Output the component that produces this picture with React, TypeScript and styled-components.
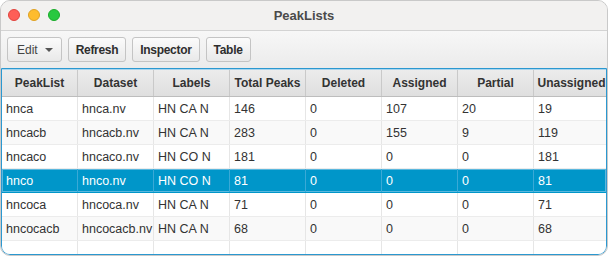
import React from 'react';
import styled, {createGlobalStyle} from 'styled-components';

const GlobalStyle = createGlobalStyle`
  html, body {
    margin: 0;
    padding: 0;
    background: #ffffff;
  }
  body {
    font-family: "Liberation Sans", Arial, sans-serif;
    color: #333333;
  }
`;

type PeakRow = {
  peakList: string;
  dataset: string;
  labels: string;
  total: number;
  deleted: number;
  assigned: number;
  partial: number;
  unassigned: number;
};

const columns = [
  'PeakList',
  'Dataset',
  'Labels',
  'Total Peaks',
  'Deleted',
  'Assigned',
  'Partial',
  'Unassigned',
];

const rows: PeakRow[] = [
  {peakList: 'hnca', dataset: 'hnca.nv', labels: 'HN CA N', total: 146, deleted: 0, assigned: 107, partial: 20, unassigned: 19},
  {peakList: 'hncacb', dataset: 'hncacb.nv', labels: 'HN CA N', total: 283, deleted: 0, assigned: 155, partial: 9, unassigned: 119},
  {peakList: 'hncaco', dataset: 'hncaco.nv', labels: 'HN CO N', total: 181, deleted: 0, assigned: 0, partial: 0, unassigned: 181},
  {peakList: 'hnco', dataset: 'hnco.nv', labels: 'HN CO N', total: 81, deleted: 0, assigned: 0, partial: 0, unassigned: 81},
  {peakList: 'hncoca', dataset: 'hncoca.nv', labels: 'HN CA N', total: 71, deleted: 0, assigned: 0, partial: 0, unassigned: 71},
  {peakList: 'hncocacb', dataset: 'hncocacb.nv', labels: 'HN CA N', total: 68, deleted: 0, assigned: 0, partial: 0, unassigned: 68},
];

const SELECTED = 3;

export default function App() {
  return (
    <>
      <GlobalStyle />
      <Window>
        <TitleBar>
          <Lights>
            <Light $color="#fe5f57" $edge="#e0443e" />
            <Light $color="#febc2e" $edge="#dea123" />
            <Light $color="#28c840" $edge="#1aab29" />
          </Lights>
          <Title>PeakLists</Title>
        </TitleBar>
        <Toolbar>
          <Button $regular>
            Edit
            <Caret />
          </Button>
          <Button>Refresh</Button>
          <Button>Inspector</Button>
          <Button>Table</Button>
        </Toolbar>
        <TableFrame>
          <HeaderRow>
            {columns.map((c) => (
              <HeaderCell key={c}>{c}</HeaderCell>
            ))}
          </HeaderRow>
          {rows.map((r, i) => (
            <Row key={r.peakList} $odd={i % 2 === 1} $selected={i === SELECTED}>
              <Cell>{r.peakList}</Cell>
              <Cell>{r.dataset}</Cell>
              <Cell>{r.labels}</Cell>
              <Cell>{r.total}</Cell>
              <Cell>{r.deleted}</Cell>
              <Cell>{r.assigned}</Cell>
              <Cell>{r.partial}</Cell>
              <Cell>{r.unassigned}</Cell>
            </Row>
          ))}
          <Row $odd={false} $selected={false}>
            {columns.map((c) => (
              <Cell key={c} />
            ))}
          </Row>
        </TableFrame>
      </Window>
    </>
  );
}

const Window = styled.div`
  width: 608px;
  height: 256px;
  box-sizing: border-box;
  display: flex;
  flex-direction: column;
  border-radius: 10px;
  overflow: hidden;
  background: #ececec;
  border: 1px solid #c9c9c9;
`;

const TitleBar = styled.div`
  position: relative;
  height: 29px;
  flex: none;
  display: flex;
  align-items: center;
  justify-content: center;
  background: #f2f1f0;
  border-bottom: 1px solid #d3d3d3;
`;

const Lights = styled.div`
  position: absolute;
  left: 7px;
  top: 8px;
  display: flex;
  gap: 8px;
`;

const Light = styled.span<{$color: string; $edge: string}>`
  width: 12px;
  height: 12px;
  border-radius: 50%;
  box-sizing: border-box;
  background: ${(p) => p.$color};
  border: 0.5px solid ${(p) => p.$edge};
`;

const Title = styled.div`
  font-size: 13px;
  font-weight: bold;
  color: #4a4a4a;
`;

const Toolbar = styled.div`
  height: 37px;
  flex: none;
  box-sizing: border-box;
  display: flex;
  align-items: center;
  gap: 6px;
  padding: 0 6px;
  background: linear-gradient(#f7f7f7, #ebebeb);
`;

const Button = styled.div<{$regular?: boolean}>`
  height: 25px;
  box-sizing: border-box;
  display: flex;
  align-items: center;
  gap: 7px;
  border: 1px solid #c4c4c4;
  border-radius: 3px;
  background: linear-gradient(#fbfbfb, #e9e9e9);
  font-size: 12px;
  font-weight: ${(p) => (p.$regular ? 'normal' : 'bold')};
  letter-spacing: ${(p) => (p.$regular ? '0' : '-0.3px')};
  color: ${(p) => (p.$regular ? '#444444' : '#2e2e2e')};
  padding-left: ${(p) => (p.$regular ? '9px' : '7px')};
  padding-right: ${(p) => (p.$regular ? '8px' : '7px')};
`;

const Caret = styled.span`
  width: 0;
  height: 0;
  border-left: 4px solid transparent;
  border-right: 4px solid transparent;
  border-top: 4px solid #555555;
`;

const TableFrame = styled.div`
  flex: 1;
  box-sizing: border-box;
  overflow: hidden;
  background: #ffffff;
  border: 1px solid #2b98d0;
  box-shadow: inset 0 0 0 1px #a9d5ee;
  border-radius: 0 0 9px 9px;
`;

const HeaderRow = styled.div`
  display: grid;
  grid-template-columns: repeat(8, 76px);
  height: 27px;
  box-sizing: border-box;
  margin-top: 1px;
  background: linear-gradient(#ececec, #dfdfdf);
  border-bottom: 1px solid #bdbdbd;
`;

const HeaderCell = styled.div`
  display: flex;
  align-items: center;
  justify-content: center;
  font-size: 12px;
  font-weight: bold;
  color: #333333;
  border-right: 1px solid #c9c9c9;
  white-space: nowrap;
  overflow: hidden;
`;

const Row = styled.div<{$odd: boolean; $selected: boolean}>`
  display: grid;
  grid-template-columns: repeat(8, 76px);
  height: 24px;
  box-sizing: border-box;
  border-bottom: 1px solid ${(p) => (p.$selected ? '#0096c9' : '#ececec')};
  background: ${(p) => (p.$selected ? '#0096c9' : p.$odd ? '#f9f9f9' : '#ffffff')};
  color: ${(p) => (p.$selected ? '#ffffff' : '#333333')};
  box-shadow: ${(p) => (p.$selected ? 'inset 0 0 0 1px #5cb8de' : 'none')};

  & > div {
    border-right-color: ${(p) => (p.$selected ? '#3aa9d6' : '#e6e6e6')};
  }
`;

const Cell = styled.div`
  display: flex;
  align-items: center;
  padding-left: 4px;
  font-size: 12.5px;
  white-space: nowrap;
  overflow: hidden;
  border-right: 1px solid #e6e6e6;
`;
